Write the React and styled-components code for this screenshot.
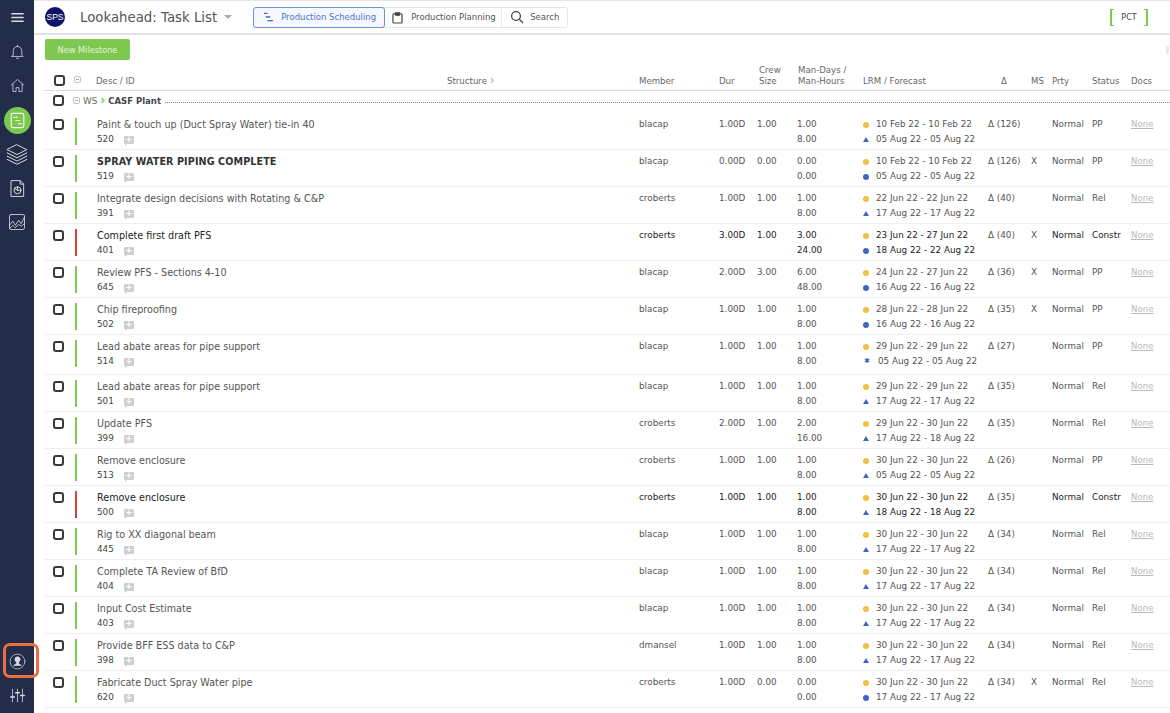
import React from "react";
import styled, { createGlobalStyle } from "styled-components";

const Global = createGlobalStyle`
  html, body { margin: 0; padding: 0; background: #fff; height: 100%; overflow: hidden; }
  body { font-family: "DejaVu Sans", Verdana, sans-serif; color: #555; }
`;

const Page = styled.div`
  display: flex;
  width: 1170px;
  height: 713px;
  overflow: hidden;
`;
const Sidebar = styled.nav`
  width: 34px;
  flex: none;
  background: #232d4a;
  display: flex;
  flex-direction: column;
  align-items: center;
  position: relative;
  z-index: 2;
  padding-bottom: 1px;
  box-sizing: border-box;
`;
const SideIcon = styled.div`
  height: ${(p) => p.$h}px;
  width: 34px;
  flex: none;
  display: flex;
  align-items: center;
  justify-content: center;
  color: #d8dbe3;
`;
const ActiveDisc = styled.div`
  width: 27px;
  height: 27px;
  border-radius: 50%;
  background: #7ac94f;
  display: flex;
  align-items: center;
  justify-content: center;
  color: #fff;
`;
const Spacer = styled.div`
  flex: 1;
`;
const Highlight = styled.div`
  position: absolute;
  left: 3px;
  top: 643px;
  width: 36px;
  height: 35px;
  box-sizing: border-box;
  border: 3px solid #e8703f;
  border-radius: 7px;
`;
const Main = styled.main`
  flex: 1;
  min-width: 0;
  display: flex;
  flex-direction: column;
`;
const Header = styled.header`
  height: 35px;
  flex: none;
  box-sizing: border-box;
  border-top: 1px solid #e6e6e6;
  border-bottom: 2px solid #e2e2e2;
  display: flex;
  align-items: center;
  padding-left: 11px;
`;
const Logo = styled.div`
  width: 20px;
  height: 20px;
  border-radius: 50%;
  background: #0d1466;
  color: #fff;
  font: 8.5px "Liberation Sans", sans-serif;
  display: flex;
  align-items: center;
  justify-content: center;
  flex: none;
`;
const Title = styled.h1`
  margin: 0 0 0 15px;
  font-size: 13.3px;
  font-weight: 400;
  color: #555;
  white-space: nowrap;
`;
const Caret = styled.span`
  width: 0;
  height: 0;
  margin: 0 21px 0 7px;
  border-left: 4px solid transparent;
  border-right: 4px solid transparent;
  border-top: 4px solid #aaa;
`;
const Tabs = styled.div`
  display: flex;
  height: 21px;
  box-sizing: border-box;
  border: 1px solid #e6e6e6;
  border-radius: 3px;
`;
const Tab = styled.div`
  display: flex;
  align-items: center;
  box-sizing: border-box;
  width: ${(p) => p.$w}px;
  margin: ${(p) => (p.$active ? "-1px 0 -1px -1px" : "0")};
  padding-left: ${(p) => p.$pad}px;
  gap: ${(p) => p.$gap}px;
  font-size: 8.5px;
  white-space: nowrap;
  color: ${(p) => (p.$active ? "#4f75c9" : "#555")};
  border: ${(p) => (p.$active ? "1px solid #6f8fd6" : "0")};
  border-right: ${(p) => (p.$active ? "1px solid #6f8fd6" : "1px solid #ececec")};
  border-radius: ${(p) => (p.$active ? "3px" : "0")};
  background: ${(p) => (p.$active ? "#f5f8ff" : "#fff")};
  &:last-child { border-right: 0; }
`;
const Pct = styled.div`
  margin-left: auto;
  margin-right: 22px;
  width: 38px;
  height: 17px;
  box-sizing: border-box;
  display: flex;
  align-items: center;
  justify-content: center;
  font-size: 8px;
  color: #444;
  position: relative;
  &::before, &::after {
    content: "";
    position: absolute;
    top: 0;
    bottom: 0;
    width: 2px;
    border-top: 1px solid #7ec850;
    border-bottom: 1px solid #7ec850;
  }
  &::before { left: 0; border-left: 2px solid #7ec850; }
  &::after { right: 0; border-right: 2px solid #7ec850; }
`;
const Toolbar = styled.div`
  flex: none;
  display: flex;
  justify-content: space-between;
  align-items: center;
  padding: 4px 1px 0 11px;
`;
const GreenButton = styled.button`
  width: 85px;
  height: 21px;
  padding: 0;
  border: 0;
  border-radius: 2px;
  background: #7ec850;
  color: #e4f5d8;
  font: 8.2px "DejaVu Sans", sans-serif;
`;
const EdgeMark = styled.span`
  width: 3px;
  height: 8px;
  background: #e8e8e8;
`;
const Columns = "29px 24px 350px 192px 80px 38px 40px 66px 125px 43px 21px 40px 39px 36px";

const HeadRow = styled.div`
  display: grid;
  grid-template-columns: ${Columns};
  height: 31px;
  margin-left: 10px;
  box-sizing: border-box;
  border-bottom: 1px solid #dcdcdc;
  align-items: end;
  padding-bottom: 3px;
  font-size: 8.6px;
  line-height: 11px;
  color: #666;
`;
const HeadCell = styled.div`
  white-space: pre-line;
  padding-left: ${(p) => p.$pl || 0}px;
  padding-bottom: ${(p) => p.$pb || 0}px;
  margin-left: ${(p) => p.$ml || 0}px;
`;
const Box = styled.span`
  display: block;
  box-sizing: border-box;
  flex: none;
  width: 11px;
  height: 11px;
  margin-left: ${(p) => p.$ml || 0}px;
  border: 2px solid #3a3a3a;
  border-radius: 3px;
  background: #fff;
`;
const Minus = styled.span`
  display: block;
  box-sizing: border-box;
  width: 7px;
  height: 7px;
  border: 1px solid #c4c4c4;
  border-radius: 2px;
  position: relative;
  flex: none;
  margin-left: ${(p) => p.$ml || 0}px;
  margin-right: ${(p) => p.$mr || 0}px;
  &::after {
    content: "";
    position: absolute;
    left: 1px;
    right: 1px;
    top: 2px;
    height: 1px;
    background: #aaa;
  }
`;
const GroupRow = styled.div`
  display: flex;
  align-items: center;
  height: 22px;
  margin-left: 10px;
  box-sizing: border-box;
  padding: 0 0 3px 9px;
  font-size: 8.8px;
  color: #666;
`;
const GroupName = styled.b`
  color: #444;
  font-weight: 700;
  margin: 0 3px 0 0;
  font-size: 8.5px;
  white-space: nowrap;
`;
const Chevron = styled.span`
  color: #7ac94f;
  margin: 0 3px 2px 3px;
  font-size: 12px;
  line-height: 10px;
  font-weight: 700;
`;
const GrayChevron = styled.span`
  color: #aaa;
  font-size: 12px;
  line-height: 10px;
`;
const Dotted = styled.span`
  flex: 1;
  border-top: 1px dotted #8a8a8a;
  margin: 3px 0 0 1px;
`;
const Row = styled.div`
  display: grid;
  grid-template-columns: ${Columns};
  height: ${(p) => p.$h}px;
  margin-left: 10px;
  box-sizing: border-box;
  border-bottom: 1px solid #f0f0f0;
  font-size: 8.8px;
  color: ${(p) => (p.$dark ? "#222" : "#555")};
`;
const Cell = styled.div`
  padding-top: 4px;
  line-height: 15px;
  white-space: nowrap;
`;
const MutedCell = styled(Cell)`
  color: #555;
`;
const CheckCell = styled.div`
  padding: 6px 0 0 9px;
`;
const BarCell = styled.div`
  padding: 5px 0 0 2px;
`;
const Bar = styled.div`
  width: 2px;
  height: 27px;
  background: ${(p) => (p.$red ? "#d6423c" : "#7ecb52")};
`;
const TaskName = styled.div`
  font-size: 9.6px;
  line-height: 15px;
  font-weight: ${(p) => (p.$bold ? 700 : 400)};
  letter-spacing: ${(p) => (p.$bold ? "0.1px" : "0")};
  color: ${(p) => (p.$bold ? "#333" : "inherit")};
`;
const IdLine = styled.div`
  display: flex;
  align-items: center;
  gap: 10px;
  font-size: 8.8px;
  line-height: 15px;
  color: #444;
`;
const Note = styled.span`
  display: flex;
  align-items: center;
  justify-content: center;
  width: 10px;
  height: 8px;
  margin-top: 1px;
  background: #cfcfcf;
  color: #fff;
  font-size: 8px;
  font-weight: 700;
  line-height: 8px;
  border-radius: 1px;
  position: relative;
  &::after {
    content: "";
    position: absolute;
    left: 1px;
    bottom: -2px;
    border-top: 2px solid #cfcfcf;
    border-right: 2px solid transparent;
  }
`;
const DateLine = styled.div`
  display: flex;
  align-items: center;
  line-height: 15px;
  height: 15px;
`;
const Marker = styled.span`
  width: 13px;
  flex: none;
  display: flex;
  align-items: center;
`;
const Dot = styled.span`
  display: block;
  width: 6px;
  height: 6px;
  border-radius: 50%;
  background: ${(p) => p.$color};
`;
const Tri = styled.span`
  display: block;
  width: 0;
  height: 0;
  border-left: 3px solid transparent;
  border-right: 3px solid transparent;
  border-bottom: 5px solid #3f66c4;
`;
const Star = styled.span`
  color: #3f66c4;
  font-size: 7px;
  line-height: 9px;
  width: 15px;
  flex: none;
  padding-left: 1px;
  box-sizing: border-box;
`;
const DocLink = styled.span`
  color: #b9b9b9;
  text-decoration: underline;
  font-size: 8.6px;
`;

const I = ({ children, s = 16, w = 1.1, vb = 24 }) => (
  <svg width={s} height={s} viewBox={`0 0 ${vb} ${vb}`} fill="none" stroke="currentColor" strokeWidth={w} strokeLinecap="round" strokeLinejoin="round">
    {children}
  </svg>
);

const T = "tri", C = "dot", S = "star";
const D = (a, b) => `${a} - ${b}`;
const rows = [
  { n: "Paint & touch up (Duct Spray Water) tie-in 40", id: "520", m: "blacap", dur: "1.00D", crew: "1.00", a: "1.00", b: "8.00", d1: D("10 Feb 22", "10 Feb 22"), k: T, d2: D("05 Aug 22", "05 Aug 22"), de: "Δ (126)", ms: "", st: "PP" },
  { n: "SPRAY WATER PIPING COMPLETE", bold: true, id: "519", m: "blacap", dur: "0.00D", crew: "0.00", a: "0.00", b: "0.00", d1: D("10 Feb 22", "10 Feb 22"), k: C, d2: D("05 Aug 22", "05 Aug 22"), de: "Δ (126)", ms: "X", st: "PP" },
  { n: "Integrate design decisions with Rotating & C&P", id: "391", m: "croberts", dur: "1.00D", crew: "1.00", a: "1.00", b: "8.00", d1: D("22 Jun 22", "22 Jun 22"), k: T, d2: D("17 Aug 22", "17 Aug 22"), de: "Δ (40)", ms: "", st: "Rel" },
  { n: "Complete first draft PFS", red: true, id: "401", m: "croberts", dur: "3.00D", crew: "1.00", a: "3.00", b: "24.00", d1: D("23 Jun 22", "27 Jun 22"), k: C, d2: D("18 Aug 22", "22 Aug 22"), de: "Δ (40)", ms: "X", st: "Constr" },
  { n: "Review PFS - Sections 4-10", id: "645", m: "blacap", dur: "2.00D", crew: "3.00", a: "6.00", b: "48.00", d1: D("24 Jun 22", "27 Jun 22"), k: C, d2: D("16 Aug 22", "16 Aug 22"), de: "Δ (36)", ms: "X", st: "PP" },
  { n: "Chip fireproofing", id: "502", m: "blacap", dur: "1.00D", crew: "1.00", a: "1.00", b: "8.00", d1: D("28 Jun 22", "28 Jun 22"), k: C, d2: D("16 Aug 22", "16 Aug 22"), de: "Δ (35)", ms: "X", st: "PP" },
  { n: "Lead abate areas for pipe support", id: "514", h: 40, m: "blacap", dur: "1.00D", crew: "1.00", a: "1.00", b: "8.00", d1: D("29 Jun 22", "29 Jun 22"), k: S, d2: D("05 Aug 22", "05 Aug 22"), de: "Δ (27)", ms: "", st: "PP" },
  { n: "Lead abate areas for pipe support", id: "501", m: "blacap", dur: "1.00D", crew: "1.00", a: "1.00", b: "8.00", d1: D("29 Jun 22", "29 Jun 22"), k: T, d2: D("17 Aug 22", "17 Aug 22"), de: "Δ (35)", ms: "", st: "Rel" },
  { n: "Update PFS", id: "399", m: "croberts", dur: "2.00D", crew: "1.00", a: "2.00", b: "16.00", d1: D("29 Jun 22", "30 Jun 22"), k: T, d2: D("17 Aug 22", "18 Aug 22"), de: "Δ (35)", ms: "", st: "Rel" },
  { n: "Remove enclosure", id: "513", m: "croberts", dur: "1.00D", crew: "1.00", a: "1.00", b: "8.00", d1: D("30 Jun 22", "30 Jun 22"), k: T, d2: D("05 Aug 22", "05 Aug 22"), de: "Δ (26)", ms: "", st: "PP" },
  { n: "Remove enclosure", red: true, id: "500", m: "croberts", dur: "1.00D", crew: "1.00", a: "1.00", b: "8.00", d1: D("30 Jun 22", "30 Jun 22"), k: T, d2: D("18 Aug 22", "18 Aug 22"), de: "Δ (35)", ms: "", st: "Constr" },
  { n: "Rig to XX diagonal beam", id: "445", m: "blacap", dur: "1.00D", crew: "1.00", a: "1.00", b: "8.00", d1: D("30 Jun 22", "30 Jun 22"), k: T, d2: D("17 Aug 22", "17 Aug 22"), de: "Δ (34)", ms: "", st: "Rel" },
  { n: "Complete TA Review of BfD", id: "404", m: "blacap", dur: "1.00D", crew: "1.00", a: "1.00", b: "8.00", d1: D("30 Jun 22", "30 Jun 22"), k: T, d2: D("17 Aug 22", "17 Aug 22"), de: "Δ (34)", ms: "", st: "Rel" },
  { n: "Input Cost Estimate", id: "403", m: "blacap", dur: "1.00D", crew: "1.00", a: "1.00", b: "8.00", d1: D("30 Jun 22", "30 Jun 22"), k: T, d2: D("17 Aug 22", "17 Aug 22"), de: "Δ (34)", ms: "", st: "Rel" },
  { n: "Provide BFF ESS data to C&P", id: "398", m: "dmansel", dur: "1.00D", crew: "1.00", a: "1.00", b: "8.00", d1: D("30 Jun 22", "30 Jun 22"), k: T, d2: D("17 Aug 22", "17 Aug 22"), de: "Δ (34)", ms: "", st: "Rel" },
  { n: "Fabricate Duct Spray Water pipe", id: "620", m: "croberts", dur: "1.00D", crew: "0.00", a: "0.00", b: "0.00", d1: D("30 Jun 22", "30 Jun 22"), k: C, d2: D("17 Aug 22", "17 Aug 22"), de: "Δ (34)", ms: "X", st: "Rel" },
];

const ForecastMark = ({ k }) => {
  if (k === S) return <Star>✱</Star>;
  return <Marker>{k === T ? <Tri /> : <Dot $color="#3f66c4" />}</Marker>;
};

const TaskRow = ({ r }) => (
  <Row $h={r.h || 37} $dark={r.red}>
    <CheckCell><Box /></CheckCell>
    <BarCell><Bar $red={r.red} /></BarCell>
    <Cell>
      <TaskName $bold={r.bold}>{r.n}</TaskName>
      <IdLine>{r.id}<Note>+</Note></IdLine>
    </Cell>
    <Cell />
    <Cell>{r.m}</Cell>
    <Cell>{r.dur}</Cell>
    <Cell>{r.crew}</Cell>
    <Cell>{r.a}<br />{r.b}</Cell>
    <Cell>
      <DateLine><Marker><Dot $color="#f5bf42" /></Marker>{r.d1}</DateLine>
      <DateLine><ForecastMark k={r.k} />{r.d2}</DateLine>
    </Cell>
    <MutedCell>{r.de}</MutedCell>
    <MutedCell>{r.ms}</MutedCell>
    <Cell>Normal</Cell>
    <Cell>{r.st}</Cell>
    <Cell><DocLink>None</DocLink></Cell>
  </Row>
);

export default function App() {
  return (
    <Page>
      <Global />
      <Sidebar>
        <SideIcon $h={34}>
          <I s={15} w={2.4}><path d="M3 6h18M3 12h18M3 18h18" /></I>
        </SideIcon>
        <SideIcon $h={34}>
          <I s={17}><path d="M6 17V11a6 6 0 0 1 12 0v6l2 2H4z" /><path d="M10.5 21.5h3M12 3v2" /></I>
        </SideIcon>
        <SideIcon $h={34}>
          <I s={17}><path d="M3 11.5 12 3.5l9 8M5.5 10v10.5h4.5V15h4v5.5h4.5V10" /></I>
        </SideIcon>
        <SideIcon $h={36}>
          <ActiveDisc>
            <I s={19} w={1.3}><rect x="4" y="3" width="16" height="18" rx="2.5" /><path d="M7 8h5M10 12h5M13 16h4" /></I>
          </ActiveDisc>
        </SideIcon>
        <SideIcon $h={32}>
          <I s={26} w={0.9}><path d="M12 3.5l9 4.5-9 4.5L3 8z" /><path d="M3 11l9 4.5 9-4.5M3 14l9 4.5 9-4.5M3 17l9 4.5 9-4.5" /></I>
        </SideIcon>
        <SideIcon $h={36}>
          <I s={21} w={1.1}><path d="M5 3h10l4 4v14H5z" /><path d="M15 3v4h4" /><circle cx="12" cy="14" r="4" /><path d="M12 14l-3-2M12 10v4h4" /></I>
        </SideIcon>
        <SideIcon $h={32}>
          <I s={20} w={1}><rect x="3" y="3" width="18" height="18" rx="2" /><path d="M3 16l4-5 3 5 4-6 3 4 4-8M3 20l4-4 3 3 4-4 3 2 4-3" /></I>
        </SideIcon>
        <Spacer />
        <SideIcon $h={34}>
          <I s={17} w={1}>
            <circle cx="12" cy="12" r="10.5" />
            <circle cx="12" cy="9" r="3.6" fill="currentColor" />
            <path d="M10.5 12v3l-4 2.5h11l-4-2.5v-3z" fill="currentColor" />
          </I>
        </SideIcon>
        <SideIcon $h={34}>
          <I s={17} w={1.1}><path d="M5 3v18M12 3v18M19 3v18" /><path d="M2.5 14h5M9.5 8h5M16.5 12h5" strokeWidth="2.2" /></I>
        </SideIcon>
        <Highlight />
      </Sidebar>
      <Main>
        <Header>
          <Logo>SPS</Logo>
          <Title>Lookahead: Task List</Title>
          <Caret />
          <Tabs>
            <Tab $active $w={132} $pad={9} $gap={7}>
              <svg width="11" height="12" viewBox="0 0 12 12" fill="none" stroke="#3f66c4" strokeWidth="1.4"><path d="M1 2h4M3 6h5M5 10h6" /></svg>
              Production Scheduling
            </Tab>
            <Tab $w={117} $pad={7} $gap={8}>
              <svg width="11" height="13" viewBox="0 0 12 13" fill="none" stroke="#444" strokeWidth="1.3"><rect x="1" y="2.5" width="10" height="10" rx="1" /><path d="M4 1.5h4v2.5H4z" fill="#444" /></svg>
              Production Planning
            </Tab>
            <Tab $w={65} $pad={8} $gap={6}>
              <svg width="14" height="14" viewBox="0 0 14 14" fill="none" stroke="#444" strokeWidth="1.3"><circle cx="6" cy="6" r="4.4" /><path d="M9.3 9.3 13 13" /></svg>
              Search
            </Tab>
          </Tabs>
          <Pct>PCT</Pct>
        </Header>
        <Toolbar>
          <GreenButton>New Milestone</GreenButton>
          <EdgeMark />
        </Toolbar>
        <HeadRow>
          <HeadCell $pb={1}><Box $ml={10} /></HeadCell>
          <HeadCell $pb={4}><Minus $ml={1} /></HeadCell>
          <HeadCell $ml={-1}>Desc / ID</HeadCell>
          <HeadCell>Structure <GrayChevron>›</GrayChevron></HeadCell>
          <HeadCell>Member</HeadCell>
          <HeadCell>Dur</HeadCell>
          <HeadCell $pl={2}>{"Crew\nSize"}</HeadCell>
          <HeadCell $pl={1}>{"Man-Days /\nMan-Hours"}</HeadCell>
          <HeadCell>LRM / Forecast</HeadCell>
          <HeadCell $pl={13}>Δ</HeadCell>
          <HeadCell>MS</HeadCell>
          <HeadCell>Prty</HeadCell>
          <HeadCell>Status</HeadCell>
          <HeadCell>Docs</HeadCell>
        </HeadRow>
        <GroupRow>
          <Box />
          <Minus $ml={9} $mr={3} />
          WS<Chevron>›</Chevron><GroupName>CASF Plant</GroupName>
          <Dotted />
        </GroupRow>
        {rows.map((r) => <TaskRow key={r.id} r={r} />)}
      </Main>
    </Page>
  );
}
